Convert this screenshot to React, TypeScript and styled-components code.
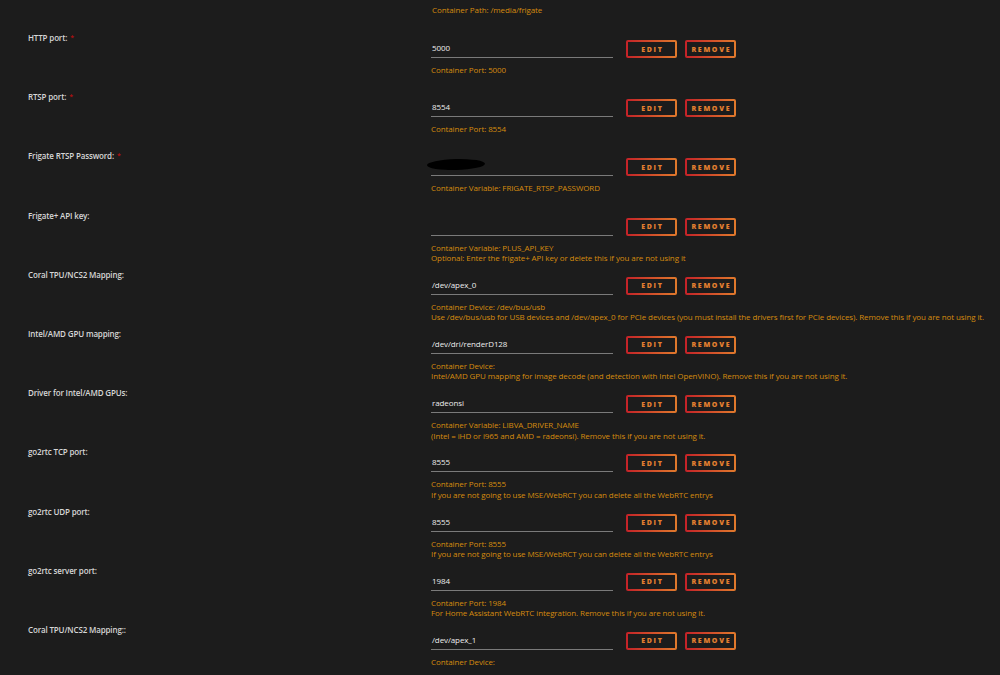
import { FC } from 'react';
import styled, { createGlobalStyle } from 'styled-components';

const GlobalStyle = createGlobalStyle`
  html, body {
    margin: 0;
    padding: 0;
    background: #1c1c1c;
  }
  body {
    font-family: 'Open Sans', 'Liberation Sans', sans-serif;
    overflow: hidden;
  }
`;

const Page = styled.div`
  width: 1000px;
  height: 675px;
  overflow: hidden;
  background: #1c1c1c;
`;

const TopHint = styled.div`
  height: 30px;
  padding: 5px 0 0 432px;
  box-sizing: border-box;
`;

const Row = styled.div`
  display: grid;
  grid-template-columns: 431px 1fr;
  height: 59.2px;
`;

const Label = styled.div`
  padding: 3px 0 0 28px;
  font-size: 8px;
  line-height: 10px;
  font-weight: 600;
  letter-spacing: -0.15px;
  color: #d6d6d6;
`;

const Required = styled.span`
  color: #b01010;
  font-size: 7px;
  margin-left: 3px;
  vertical-align: 1px;
`;

const Content = styled.div`
  display: flex;
  flex-direction: column;
  padding-top: 10px;
`;

const Controls = styled.div`
  display: flex;
  align-items: flex-start;
  height: 18px;
`;

const Field = styled.div`
  position: relative;
  width: 182px;
  height: 18px;
  box-sizing: border-box;
  border-bottom: 1.5px solid #7a7a7a;
  margin-right: 13px;
  padding: 3px 0 0 1px;
  font-size: 8px;
  line-height: 10px;
  font-weight: 500;
  letter-spacing: -0.1px;
  color: #ececec;
`;

const Blot = styled.div`
  position: absolute;
  left: -4px;
  top: 1px;
  width: 58px;
  height: 11px;
  border-radius: 50%;
  background: #000;
  transform: rotate(-1.5deg);
`;

const Button = styled.button`
  width: 51px;
  height: 18px;
  margin-right: 8px;
  padding: 0;
  box-sizing: border-box;
  border: 2px solid transparent;
  border-radius: 2px;
  background:
    linear-gradient(#1c1c1c, #1c1c1c) padding-box,
    linear-gradient(90deg, #c42228, #e07a2c) border-box;
  color: #e27f30;
  font-family: 'Open Sans', 'Liberation Sans', sans-serif;
  font-size: 7px;
  font-weight: 800;
  letter-spacing: 1.7px;
  text-indent: 1.7px;
  cursor: pointer;
`;

const Hints = styled.div`
  margin-top: 7px;
`;

const Hint = styled.div`
  font-size: 8px;
  line-height: 10.5px;
  font-weight: 500;
  letter-spacing: -0.1px;
  color: #d58b0e;
  white-space: nowrap;
`;

type Setting = {
  label: string;
  required?: boolean;
  value?: string;
  hidden?: boolean;
  hints: string[];
};

const settings: Setting[] = [
  { label: 'HTTP port:', required: true, value: '5000', hints: ['Container Port: 5000'] },
  { label: 'RTSP port:', required: true, value: '8554', hints: ['Container Port: 8554'] },
  {
    label: 'Frigate RTSP Password:',
    required: true,
    hidden: true,
    hints: ['Container Variable: FRIGATE_RTSP_PASSWORD'],
  },
  {
    label: 'Frigate+ API key:',
    hints: [
      'Container Variable: PLUS_API_KEY',
      'Optional: Enter the frigate+ API key or delete this if you are not using it',
    ],
  },
  {
    label: 'Coral TPU/NCS2 Mapping:',
    value: '/dev/apex_0',
    hints: [
      'Container Device: /dev/bus/usb',
      'Use /dev/bus/usb for USB devices and /dev/apex_0 for PCIe devices (you must install the drivers first for PCIe devices). Remove this if you are not using it.',
    ],
  },
  {
    label: 'Intel/AMD GPU mapping:',
    value: '/dev/dri/renderD128',
    hints: [
      'Container Device:',
      'Intel/AMD GPU mapping for image decode (and detection with Intel OpenVINO). Remove this if you are not using it.',
    ],
  },
  {
    label: 'Driver for Intel/AMD GPUs:',
    value: 'radeonsi',
    hints: [
      'Container Variable: LIBVA_DRIVER_NAME',
      '(Intel = iHD or i965 and AMD = radeonsi). Remove this if you are not using it.',
    ],
  },
  {
    label: 'go2rtc TCP port:',
    value: '8555',
    hints: [
      'Container Port: 8555',
      'If you are not going to use MSE/WebRCT you can delete all the WebRTC entrys',
    ],
  },
  {
    label: 'go2rtc UDP port:',
    value: '8555',
    hints: [
      'Container Port: 8555',
      'If you are not going to use MSE/WebRCT you can delete all the WebRTC entrys',
    ],
  },
  {
    label: 'go2rtc server port:',
    value: '1984',
    hints: [
      'Container Port: 1984',
      'For Home Assistant WebRTC integration. Remove this if you are not using it.',
    ],
  },
  {
    label: 'Coral TPU/NCS2 Mapping::',
    value: '/dev/apex_1',
    hints: ['Container Device:'],
  },
];

const SettingRow: FC<{ setting: Setting }> = ({ setting }) => (
  <Row>
    <Label>
      {setting.label}
      {setting.required && <Required>*</Required>}
    </Label>
    <Content>
      <Controls>
        <Field>
          {setting.hidden ? <Blot /> : setting.value}
        </Field>
        <Button>EDIT</Button>
        <Button>REMOVE</Button>
      </Controls>
      <Hints>
        {setting.hints.map((hint) => (
          <Hint key={hint}>{hint}</Hint>
        ))}
      </Hints>
    </Content>
  </Row>
);

const App: FC = () => (
  <Page>
    <GlobalStyle />
    <TopHint>
      <Hint>Container Path: /media/frigate</Hint>
    </TopHint>
    {settings.map((setting, i) => (
      <SettingRow key={i} setting={setting} />
    ))}
  </Page>
);

export default App;
